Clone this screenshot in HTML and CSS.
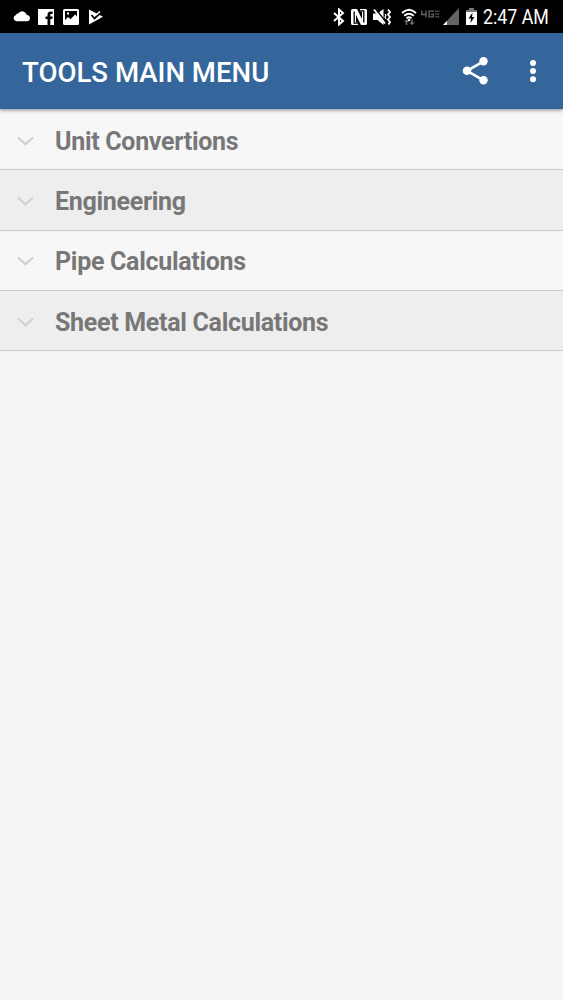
FILE: index.html
```html
<!DOCTYPE html>
<html lang="en">
<head>
    <meta charset="UTF-8">
    <meta name="viewport" content="width=device-width, initial-scale=1.0">
    <title>Tools Main Menu</title>
    <link rel="stylesheet" href="styles.css">
</head>
<body>
    <div class="status-bar">
        <div class="notifications">
            <svg width="18" height="18" viewBox="0 0 18 18"><path fill="#fff" d="M3.300 13.300a3.300 3.300 0 0 1-.4-6.400 3 3 0 0 1 2.600-1.700A4.700 4.700 0 0 1 13.800 7a3.200 3.200 0 0 1 .7 6.300z"/></svg>
            <svg width="16" height="18" viewBox="0 0 16 18"><path fill="#fff" d="M0 1h16v16h-3.700v-6h2l.4-2.500h-2.400V7.200c0-.8.3-1.200 1.200-1.200h1.200V3.600h-2c-2.200 0-3.200 1.300-3.200 3.200v1.700H7.500V11h2v6H0z"/></svg>
            <svg width="16" height="18" viewBox="0 0 16 18"><path fill="#fff" fill-rule="evenodd" d="M1.500 1h13Q16 1 16 2.500v13q0 1.500-1.500 1.500h-13Q0 17 0 15.500v-13Q0 1 1.500 1zM2 3v9l3-3 2.500 2.300L12 6.500l2 2V3zM4 4.500h2v2H4z"/></svg>
            <svg width="16" height="18" viewBox="0 0 16 18"><path fill="#fff" d="M1 1.500 15 8.700 1 16.500z"/><path fill="none" stroke="#000" stroke-width="1.800" d="m3.500 7 3 3.500L13.500 4"/><path fill="none" stroke="#fff" stroke-width="1.500" d="m8 7 4-3.500"/></svg>
        </div>
        <div class="system">
            <svg width="12" height="18" viewBox="0 0 12 18"><path fill="none" stroke="#fff" stroke-width="2" d="m1 5 9 8-4 3.500v-15L10 5l-9 8"/></svg>
            <svg class="nfc" width="16" height="18" viewBox="0 0 16 18"><path fill="#fff" d="M1.500 1H6l5 10V3.500H9V1h5.500Q16 1 16 2.500v13q0 1.500-1.500 1.500H10L5 7v7.500h2V17H1.500Q0 17 0 15.500v-13Q0 1 1.500 1z"/><path fill="none" stroke="#000" stroke-width="1.300" d="M7 15.200H3.200V3.500M9 2.800h3.800v11.700"/></svg>
            <svg class="mute" width="18" height="18" viewBox="0 0 18 18"><path fill="#fff" d="M0 5.500h4.500L10.500 1v16l-6-5H0z"/><path stroke="#000" stroke-width="1.400" d="M2.500 1 13 14"/><path stroke="#fff" stroke-width="1.900" d="m1 1.500 11 14"/><path fill="none" stroke="#fff" stroke-width="1.900" d="m15 1.500 2 2.500-2 2.500L17 9l-2 2.500 2 2.500-1.500 2.500"/><path fill="none" stroke="#fff" stroke-width="1.200" d="m12 6 1 1.500L12 9l1 2"/></svg>
            <svg class="wifi" width="16" height="18" viewBox="0 0 16 18"><g fill="none" stroke="#fff" stroke-width="1.800"><path d="M1 5q7-6.500 14 0M3.200 7.700q4.800-4 9.600 0M5.500 10.200q2.500-2 5 0"/></g><circle cx="8" cy="12" r="1.300" fill="#fff"/><path fill="#777" d="M5.500 11.500 8 14H6.200v3H4.800v-3H3zM11 17l-2.500-2.500h1.800v-3h1.400v3h1.800z"/></svg>
            <svg class="network" width="19" height="18" viewBox="0 0 19 18"><path fill="none" stroke="#666" stroke-width="1.300" d="M.8 2.500v4h5M5 2.500v7M13 3.100H8v5.800h4.400V6.200H10"/><path fill="none" stroke="#666" stroke-width="1" d="M14 3.100h4.500M14 6h4.500M14 8.900h4.500"/></svg>
            <svg class="signal" width="17" height="18" viewBox="0 0 17 18"><path fill="#646464" d="M16 0v17H0z"/><path fill="#fff" d="m0 17 4-4v4z"/></svg>
            <svg class="battery" width="11" height="18" viewBox="0 0 11 18"><path fill="#777" d="M3 0h5v2h3v3H0V2h3z"/><path fill="#fff" d="M0 4h11v13H0z"/><path fill="#000" d="M6.500 4.500 2.500 10.500H5L4.500 15l4-6H6z"/></svg>
            <span class="clock">2:47 AM</span>
        </div>
    </div>
    <div class="toolbar">
        <h1>TOOLS MAIN MENU</h1>
        <svg class="share" width="28" height="30" viewBox="0 0 28 30"><path fill="none" stroke="#fff" stroke-width="2.600" d="M22.500 5.300 6 14.800l16.500 9.500"/><g fill="#fff"><circle cx="22.500" cy="5.300" r="4.200"/><circle cx="6" cy="14.800" r="4.300"/><circle cx="22.500" cy="24.300" r="4.200"/></g></svg>
        <svg width="8" height="30" viewBox="0 0 8 30"><g fill="#fff"><circle cx="4" cy="7" r="3"/><circle cx="4" cy="15" r="3"/><circle cx="4" cy="23.300" r="3"/></g></svg>
    </div>
    <div class="menu">
        <div class="item">
            <svg width="18" height="12" viewBox="0 0 18 12"><path d="m1 2.500 7.500 6.800L16 2.500"/></svg>
            <span>Unit Convertions</span>
        </div>
        <div class="item">
            <svg width="18" height="12" viewBox="0 0 18 12"><path d="m1 2.500 7.500 6.800L16 2.500"/></svg>
            <span>Engineering</span>
        </div>
        <div class="item">
            <svg width="18" height="12" viewBox="0 0 18 12"><path d="m1 2.500 7.500 6.800L16 2.500"/></svg>
            <span>Pipe Calculations</span>
        </div>
        <div class="item">
            <svg width="18" height="12" viewBox="0 0 18 12"><path d="m1 2.500 7.500 6.800L16 2.500"/></svg>
            <span>Sheet Metal Calculations</span>
        </div>
    </div>
</body>
</html>
```

FILE: styles.css
```css
body {
    font-family: Roboto, sans-serif;
    background-color: #f5f5f5;
    margin: 0;
}
svg {
    display: block;
    flex-shrink: 0;
}
.status-bar {
    display: flex;
    justify-content: space-between;
    align-items: center;
    box-sizing: border-box;
    height: 33px;
    padding: 0 14px 0 13px;
    background: #000;
    color: #fff;
}
.notifications {
    display: flex;
    gap: 9px;
}
.notifications svg:first-child {
    margin-right: -2px;
}
.system {
    display: flex;
    align-items: center;
}
.nfc {
    margin-left: 6px;
}
.mute {
    margin-left: 6px;
}
.wifi {
    margin-left: 10px;
}
.network {
    margin-left: 4px;
}
.signal {
    margin-left: 3px;
}
.battery {
    margin-left: 6px;
}
.clock {
    width: 66px;
    margin-left: 6px;
    padding-top: 2px;
    font-size: 20px;
    line-height: 31px;
    white-space: nowrap;
    transform: scaleX(0.89);
    transform-origin: left;
}
.toolbar {
    display: flex;
    align-items: center;
    box-sizing: border-box;
    height: 76px;
    padding: 0 26px 0 22px;
    background: #35669b;
    color: #fff;
    box-shadow: 0 1px 4px rgba(0, 0, 0, 0.45);
    position: relative;
}
h1 {
    flex: 1;
    margin: 3px 0 0;
    font-size: 27.6px;
    font-weight: 500;
    white-space: nowrap;
}
.share {
    margin-right: 40px;
}
.menu {
    padding-top: 1px;
}
.item {
    display: flex;
    align-items: center;
    box-sizing: border-box;
    height: 60.33px;
    padding: 3px 0 0 17px;
    border-bottom: 1px solid #c8c8c8;
    background: #f7f7f7;
    color: #777;
    font-size: 25px;
    font-weight: 700;
    letter-spacing: -0.3px;
}
.item:nth-child(even) {
    background: #eee;
}
.item svg {
    margin: 0 20px 1px 0;
}
.item path {
    fill: none;
    stroke: #d0d0d0;
    stroke-width: 2;
}
```
